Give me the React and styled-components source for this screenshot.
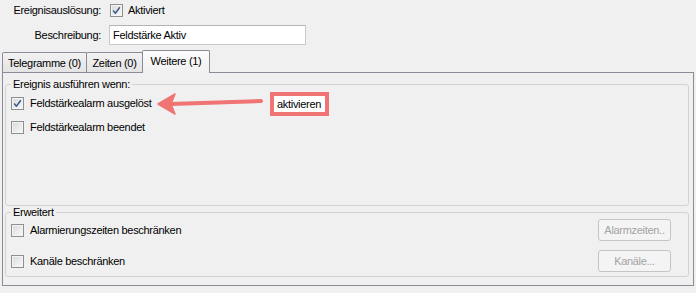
import React from "react";
import styled, { createGlobalStyle } from "styled-components";

const Global = createGlobalStyle`
  html, body {
    margin: 0;
    padding: 0;
    background: #f0f0f0;
  }
  body {
    font-family: "Liberation Sans", Arial, sans-serif;
    font-size: 11px;
    letter-spacing: -0.3px;
    color: #000;
  }
  #root {
    width: 696px;
    height: 293px;
    overflow: hidden;
  }
`;

const Header = styled.div`
  display: grid;
  grid-template-columns: 101px 1fr;
  column-gap: 9px;
  row-gap: 6px;
  padding-top: 1px;
`;

const FieldLabel = styled.div`
  justify-self: end;
  display: flex;
  align-items: center;
  height: ${(p) => p.$h || 18}px;
`;

const Field = styled.div`
  display: flex;
  align-items: center;
  height: ${(p) => p.$h || 18}px;
`;

const TextBox = styled.input`
  box-sizing: border-box;
  margin-left: -1px;
  width: 197px;
  height: 20px;
  padding: 0 3px;
  border: 1px solid #c9c9c9;
  border-top-color: #b4b4b4;
  background: #fff;
  font-family: "Liberation Sans", Arial, sans-serif;
  font-size: 11px;
  letter-spacing: -0.3px;
  color: #000;
  outline: none;
`;

const CheckRow = styled.label`
  position: relative;
  display: flex;
  align-items: center;
  gap: ${(p) => p.$gap || 6}px;
  height: ${(p) => p.$h || 18}px;
`;

const Box = styled.span`
  box-sizing: border-box;
  width: 13px;
  height: 13px;
  flex: none;
  display: flex;
  align-items: center;
  justify-content: center;
  border: 1px solid #8e8f8f;
  background: linear-gradient(135deg, #d6d8db 0%, #eceded 60%, #f8f8f8 100%);
  box-shadow: inset 0 0 0 1px #f4f4f4;
`;

const CheckBox = ({ checked }) => (
  <Box>
    {checked && (
      <svg width="11" height="11" viewBox="0 0 11 11">
        <path
          d="M2.2 5.6 L4.4 8.2 L8.8 2.2"
          fill="none"
          stroke="#3f5a8a"
          strokeWidth="1.5"
          strokeLinejoin="round"
        />
      </svg>
    )}
  </Box>
);

const TabBar = styled.div`
  display: flex;
  align-items: flex-end;
  height: 22px;
  margin-top: 5px;
  padding-left: 2px;
`;

const Tab = styled.div`
  box-sizing: border-box;
  width: ${(p) => p.$w}px;
  height: ${(p) => (p.$active ? 23 : 20)}px;
  margin-right: -1px;
  margin-bottom: ${(p) => (p.$active ? -1 : 0)}px;
  display: flex;
  align-items: center;
  justify-content: center;
  padding-bottom: ${(p) => (p.$active ? 2 : 0)}px;
  border: 1px solid #898c95;
  border-bottom: none;
  border-radius: 2px 2px 0 0;
  background: ${(p) =>
    p.$active
      ? "linear-gradient(#fcfcfc, #f0f0f0)"
      : "linear-gradient(#f2f2f2, #e4e4e4)"};
  position: ${(p) => (p.$active ? "relative" : "static")};
  z-index: ${(p) => (p.$active ? 1 : "auto")};
`;

const Page = styled.div`
  box-sizing: border-box;
  display: flex;
  flex-direction: column;
  margin-left: 2px;
  width: 692px;
  height: 214px;
  padding: 5px 4px 8px 2px;
  border: 1px solid #898c95;
  background: #f0f0f0;
`;

const Group = styled.fieldset`
  box-sizing: border-box;
  margin: 0;
  height: ${(p) => p.$h}px;
  min-inline-size: 0;
  padding: ${(p) => p.$pad};
  border: 1px solid #d3d3d3;
  border-radius: 3px;
  display: flex;
  flex-direction: column;
  gap: ${(p) => p.$gap}px;
`;

const Legend = styled.legend`
  padding: 0 2px;
  margin: 0;
  line-height: 13px;
`;

const OptionRow = styled.div`
  display: flex;
  align-items: center;
  justify-content: space-between;
  height: 22px;
`;

const Button = styled.button`
  box-sizing: border-box;
  width: 73px;
  height: 22px;
  border: 1px solid #c3c5c7;
  border-radius: 3px;
  background: #f4f4f4;
  color: #a3a3a3;
  font-family: "Liberation Sans", Arial, sans-serif;
  font-size: 11px;
  letter-spacing: -0.3px;
  padding: 0;
`;

const Annotation = styled.div`
  position: absolute;
  left: 145px;
  top: -4px;
  display: flex;
  align-items: center;
  gap: 5px;
  pointer-events: none;
`;

const Callout = styled.div`
  box-sizing: border-box;
  height: 24px;
  display: flex;
  align-items: center;
  padding: 0 4px 0 3px;
  border: 4px solid #ef7473;
  background: #fff;
`;

const Arrow = () => (
  <svg width="109" height="27" viewBox="0 0 109 27">
    <path d="M15 14 L105 11" stroke="#ef7473" strokeWidth="4" strokeLinecap="round" />
    <path d="M2 14 L19 4 L15 14 L19 24 Z" fill="#ef7473" stroke="#ef7473" strokeWidth="1.5" strokeLinejoin="round" />
  </svg>
);

export default function App() {
  return (
    <>
      <Global />
      <Header>
        <FieldLabel>Ereignisauslösung:</FieldLabel>
        <Field>
          <CheckRow $gap={5}>
            <CheckBox checked />
            Aktiviert
          </CheckRow>
        </Field>
        <FieldLabel $h={20}>Beschreibung:</FieldLabel>
        <Field $h={20}>
          <TextBox defaultValue="Feldstärke Aktiv" readOnly />
        </Field>
      </Header>

      <TabBar>
        <Tab $w={85}>Telegramme (0)</Tab>
        <Tab $w={57}>Zeiten (0)</Tab>
        <Tab $w={68} $active>Weitere (1)</Tab>
      </TabBar>

      <Page>
        <Group $h={128} $pad="3px 5px 0 5px" $gap={6}>
          <Legend>Ereignis ausführen wenn:</Legend>
          <CheckRow>
            <CheckBox checked />
            Feldstärkealarm ausgelöst
            <Annotation>
              <Arrow />
              <Callout>aktivieren</Callout>
            </Annotation>
          </CheckRow>
          <CheckRow>
            <CheckBox />
            Feldstärkealarm beendet
          </CheckRow>
        </Group>

        <Group $h={71} $pad="0 17px 4px 5px" $gap={9}>
          <Legend>Erweitert</Legend>
          <OptionRow>
            <CheckRow>
              <CheckBox />
              Alarmierungszeiten beschränken
            </CheckRow>
            <Button disabled>Alarmzeiten..</Button>
          </OptionRow>
          <OptionRow>
            <CheckRow>
              <CheckBox />
              Kanäle beschränken
            </CheckRow>
            <Button disabled>Kanäle...</Button>
          </OptionRow>
        </Group>
      </Page>
    </>
  );
}
